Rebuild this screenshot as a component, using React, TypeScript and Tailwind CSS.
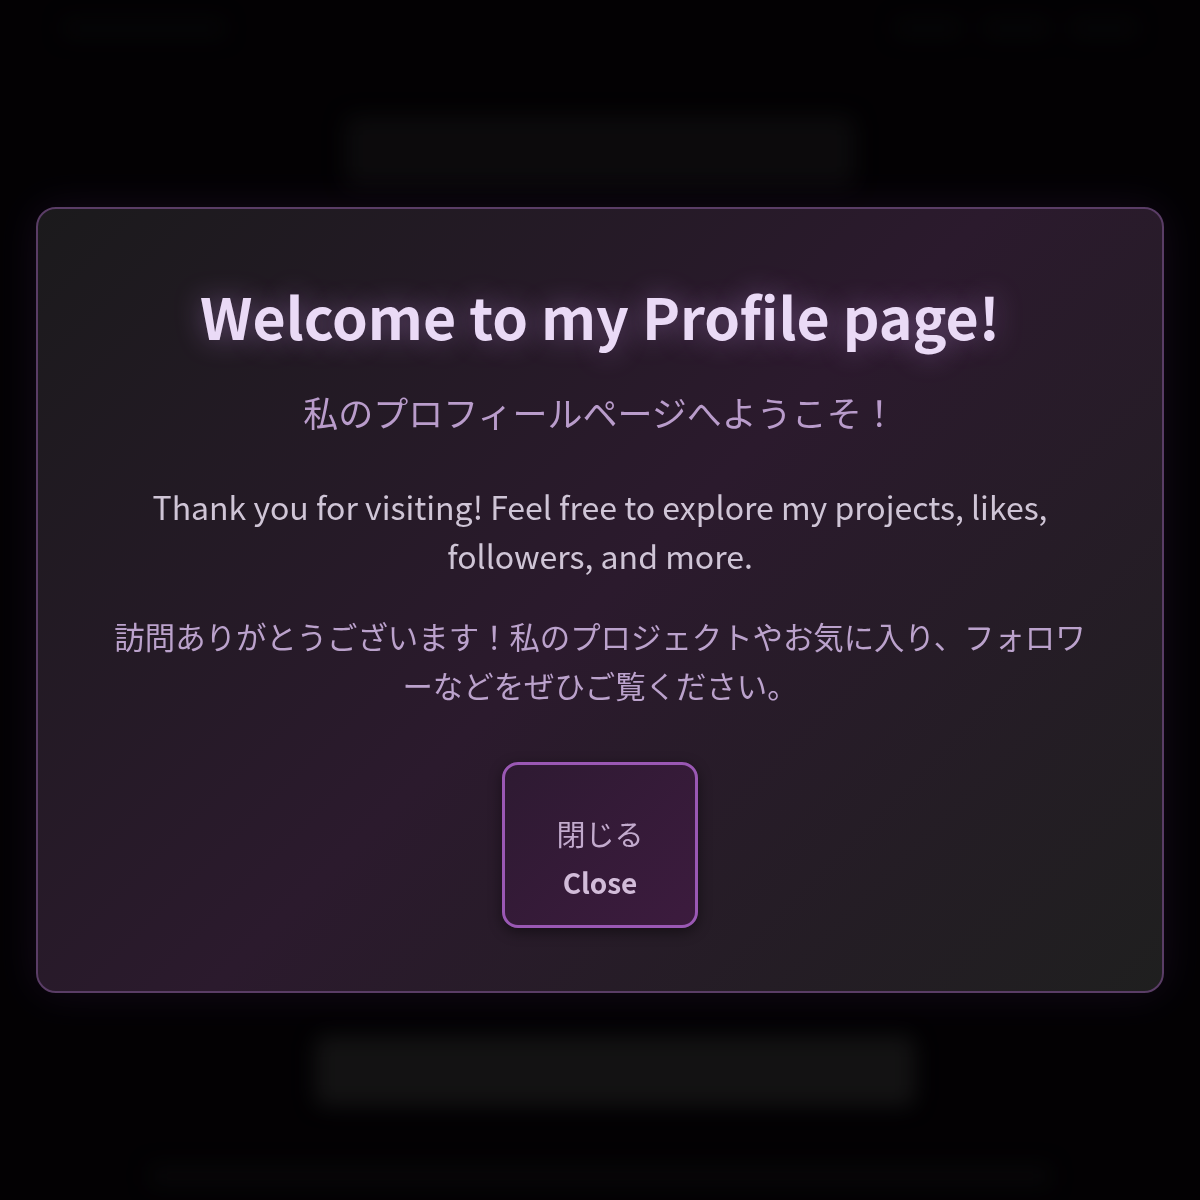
import React from 'react';

const font = "font-['Noto_Sans_CJK_JP','Noto_Sans',sans-serif]";

// Blurred profile page that sits behind the welcome dialog
const BackdropPage: React.FC = () => (
  <div className="h-full w-full flex flex-col items-center blur-[10px]">
    <div className="w-full h-[56px] flex items-center justify-between px-16">
      <div className="w-40 h-4 rounded bg-[#0b0a0d]" />
      <div className="flex gap-6">
        <div className="w-16 h-4 rounded bg-[#0b0a0d]" />
        <div className="w-16 h-4 rounded bg-[#0b0a0d]" />
        <div className="w-16 h-4 rounded bg-[#0b0a0d]" />
      </div>
    </div>
    <div className="mt-[60px] w-[510px] h-[70px] rounded-xl bg-[#141215]" />
    <div className="mt-[850px] ml-[30px] w-[600px] h-[70px] rounded-xl bg-[#201f20]" />
    <div className="mt-[60px] w-[900px] h-5 rounded bg-[#0d0c0e]" />
  </div>
);

const App: React.FC = () => {
  return (
    <div className={`relative w-full h-[1200px] overflow-hidden bg-[#050306] ${font}`}>
      <BackdropPage />

      <div className="fixed inset-0 flex items-center justify-center bg-black/40">
        <div className="w-[1128px] rounded-[20px] border-2 border-[#5a3d66] bg-[linear-gradient(135deg,#1b1a1c_0%,#2b1a2d_50%,#1f1f1f_100%)] shadow-[0_0_40px_rgba(120,60,150,0.15)] px-16 pt-16 pb-[63px] flex flex-col items-center text-center">
          <h1 className="text-[57.2px] leading-[1.5] font-bold text-[#eadaf6] [text-shadow:0_0_28px_rgba(190,140,225,0.45)]">
            Welcome to my Profile page!
          </h1>
          <p className="mt-7 text-[35px] leading-[1.4] text-[#b99ccb]">
            私のプロフィールページへようこそ！
          </p>
          <p className="mt-[46px] text-[32px] leading-[49px] text-[#cfc5d6]">
            Thank you for visiting! Feel free to explore my projects, likes, followers, and more.
          </p>
          <p className="mt-8 text-[30.4px] leading-[1.6] text-[#bba2cc]">
            訪問ありがとうございます！私のプロジェクトやお気に入り、フォロワーなどをぜひご覧ください。
          </p>
          <button className="mt-[52px] rounded-2xl border-[3px] border-[#9a58b4] bg-[linear-gradient(135deg,#2e1a32_0%,#3c1b3e_100%)] shadow-[0_4px_14px_rgba(0,0,0,0.45)] px-[51px] pt-[44px] pb-[18px] flex flex-col items-center">
            <span className="text-[29px] leading-[49px] text-[#c2aacd]">閉じる</span>
            <span className="text-[28px] leading-[49px] font-bold text-[#d2bcd9]">Close</span>
          </button>
        </div>
      </div>
    </div>
  );
};

export default App;
